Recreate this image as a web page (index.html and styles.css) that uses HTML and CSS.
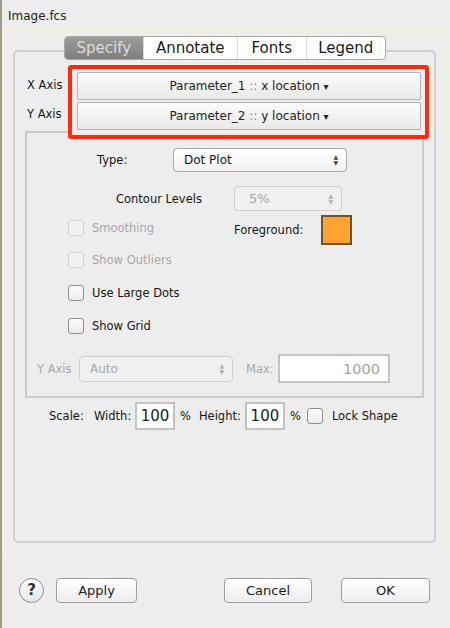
FILE: index.html
```html
<!DOCTYPE html>
<html lang="en">
<head>
    <meta charset="UTF-8">
    <meta name="viewport" content="width=device-width, initial-scale=1.0">
    <title>Image.fcs</title>
    <link rel="stylesheet" href="styles.css">
</head>
<body>
    <div class="window">
        <div class="title">Image.fcs</div>

        <div class="pane">
            <!-- Tabs -->
            <div class="tabs">
                <span class="tab active">Specify</span>
                <span class="tab">Annotate</span>
                <span class="tab">Fonts</span>
                <span class="tab">Legend</span>
            </div>

            <div class="group">
                <!-- Axes -->
                <div class="axes">
                    <div class="axis-labels">
                        <span>X Axis</span>
                        <span>Y Axis</span>
                    </div>
                    <div class="highlight">
                        <button class="axis-button">Parameter_1 <span class="sep">::</span> x location <span class="caret">&#9662;</span></button>
                        <button class="axis-button">Parameter_2 <span class="sep">::</span> y location <span class="caret">&#9662;</span></button>
                    </div>
                </div>

                <div class="inner">
                    <div class="row row-type">
                        <span class="label type-label">Type:</span>
                        <div class="select type-select">
                            <span>Dot Plot</span>
                            <span class="arrows">&#9650;<br>&#9660;</span>
                        </div>
                    </div>

                    <div class="row row-contour">
                        <span class="label contour-label">Contour Levels</span>
                        <div class="select contour-select disabled">
                            <span>5%</span>
                            <span class="arrows">&#9650;<br>&#9660;</span>
                        </div>
                    </div>

                    <div class="row row-smooth">
                        <label class="check disabled smooth-check"><span class="box"></span>Smoothing</label>
                        <span class="label fg-label">Foreground:</span>
                        <span class="swatch"></span>
                    </div>

                    <div class="row row-check first">
                        <label class="check disabled"><span class="box"></span>Show Outliers</label>
                    </div>
                    <div class="row row-check">
                        <label class="check"><span class="box"></span>Use Large Dots</label>
                    </div>
                    <div class="row row-check">
                        <label class="check"><span class="box"></span>Show Grid</label>
                    </div>

                    <div class="row row-yaxis">
                        <span class="label disabled yaxis-label">Y Axis</span>
                        <div class="select yaxis-select disabled">
                            <span>Auto</span>
                            <span class="arrows">&#9650;<br>&#9660;</span>
                        </div>
                        <span class="label disabled max-label">Max:</span>
                        <div class="field max-field disabled">1000</div>
                    </div>
                </div>

                <!-- Escala -->
                <div class="scale">
                    <span class="label scale-label">Scale:</span>
                    <span class="label width-label">Width:</span>
                    <div class="field small">100</div>
                    <span class="label pct">%</span>
                    <span class="label height-label">Height:</span>
                    <div class="field small">100</div>
                    <span class="label pct">%</span>
                    <label class="check lock"><span class="box"></span>Lock Shape</label>
                </div>
            </div>
        </div>

        <div class="footer">
            <span class="help">?</span>
            <button class="btn apply">Apply</button>
            <span class="spacer"></span>
            <button class="btn cancel">Cancel</button>
            <button class="btn ok">OK</button>
        </div>
    </div>
</body>
</html>
```

FILE: styles.css
```css
html {
    box-sizing: border-box;
}
*, *:before, *:after {
    box-sizing: inherit;
}
body {
    margin: 0;
    padding: 0;
    width: 450px;
    height: 628px;
    overflow: hidden;
    background-color: #ededed;
    font-family: 'DejaVu Sans', sans-serif;
    font-size: 11.5px;
    color: #161616;
}

.window {
    height: 628px;
    border-left: 2px solid #a49a86;
}

.title {
    height: 30px;
    padding: 9px 0 0 6px;
    font-size: 12px;
    color: #222;
}

.pane {
    height: 528px;
    margin: 0 2px 0 1px;
    border-top: 1px solid #f4f4d9;
    border-bottom: 1px solid #f4f4d9;
    border-left: 1px solid #f4f4d9;
    border-right: 2px solid #f1f1d6;
    padding-top: 5px;
}

/* Abas */
.tabs {
    display: flex;
    width: 322px;
    height: 24px;
    margin: 0 auto;
    position: relative;
    z-index: 2;
    border: 1px solid #a8a8a8;
    border-radius: 4px;
    background: #fff;
    overflow: hidden;
    font-size: 15px;
}
.tab {
    display: flex;
    align-items: center;
    justify-content: center;
    color: #1a1a1a;
    border-left: 1px solid #d8d8d8;
}
.tab:nth-child(1) { width: 78px; border-left: none; }
.tab:nth-child(2) { width: 95px; }
.tab:nth-child(3) { width: 69px; }
.tab:nth-child(4) { width: 80px; }
.tab.active {
    background: linear-gradient(#9c9c9c, #7e7e7e);
    color: #dcdcdc;
}

.group {
    height: 493px;
    margin: -10px 10px 0 9px;
    border: 2px solid #d0d0d0;
    border-radius: 5px;
    padding-top: 13px;
}

/* Eixos */
.axes {
    display: flex;
    position: relative;
    z-index: 1;
}
.axis-labels {
    width: 53px;
    padding-left: 12px;
    padding-top: 13px;
    display: flex;
    flex-direction: column;
    gap: 15px;
}
.highlight {
    width: 361px;
    border: 4px solid #ff2a10;
    border-radius: 3px;
    padding: 3px 4px 5px 5px;
    display: flex;
    flex-direction: column;
    gap: 2px;
    background: #ededed;
}
.axis-button {
    height: 28px;
    border: 1px solid #b5b5b5;
    border-radius: 2px;
    background: linear-gradient(#fbfbfb, #e9e9e9);
    font-family: inherit;
    font-size: 12px;
    color: #222;
    padding: 0;
}
.axis-button .sep {
    color: #888;
}
.axis-button .caret {
    font-size: 10px;
}

.inner {
    margin: -8px 10px 0 10px;
    height: 267px;
    border: 2px solid #cacaca;
    padding-top: 15px;
}

.row {
    display: flex;
    align-items: center;
}
.label {
    white-space: nowrap;
}
.disabled {
    color: #a8a8a8;
}

.select {
    display: flex;
    align-items: center;
    justify-content: space-between;
    border: 1px solid #a9a9a9;
    border-radius: 4px;
    background: linear-gradient(#ffffff, #f1f1f1);
    padding: 0 8px 0 10px;
    font-size: 12px;
}
.select.disabled {
    border-color: #cfcfcf;
    background: #f0f0f0;
}
.arrows {
    font-size: 6px;
    line-height: 6px;
    text-align: center;
    color: #444;
}
.select.disabled .arrows {
    color: #b0b0b0;
}

.row-type {
    height: 24px;
    padding-left: 70px;
}
.type-label { width: 76px; }
.type-select { width: 174px; height: 24px; }

.row-contour {
    height: 25px;
    margin-top: 14px;
    padding-left: 89px;
}
.contour-label { width: 118px; }
.contour-select {
    width: 108px;
    height: 25px;
    font-size: 13px;
    padding-left: 14px;
}

.row-smooth {
    height: 30px;
    margin-top: 4px;
    padding-left: 41px;
}
.smooth-check { width: 166px; margin-top: -4px; }
.fg-label { width: 87px; }
.swatch {
    width: 31px;
    height: 30px;
    background: #ffa431;
    border: 2px solid #6b5230;
}

.check {
    display: flex;
    align-items: center;
    gap: 8px;
    white-space: nowrap;
}
.box {
    width: 16px;
    height: 16px;
    border: 1px solid #8f8f8f;
    border-radius: 3px;
    background: linear-gradient(#fafafa, #ececec);
}
.check.disabled .box {
    border-color: #cfcfcf;
    background: #f1f1f1;
}

.row-check {
    height: 16px;
    margin-top: 17px;
    padding-left: 41px;
}
.row-check.first {
    margin-top: 7px;
}

.row-yaxis {
    height: 29px;
    margin-top: 20px;
    padding-left: 10px;
}
.yaxis-label { width: 42px; }
.yaxis-select {
    width: 154px;
    height: 26px;
    font-size: 12px;
}
.max-label {
    margin-left: 13px;
    width: 32px;
}

.field {
    display: flex;
    align-items: center;
    justify-content: flex-end;
    background: #fff;
    border: 2px solid #c2c2c2;
    font-size: 14px;
    color: #222;
}
.max-field {
    width: 112px;
    height: 29px;
    padding-right: 8px;
    font-size: 14.5px;
    color: #a2a2a2;
}
.field.small {
    width: 40px;
    height: 28px;
    justify-content: center;
    font-size: 15px;
}

/* Escala */
.scale {
    display: flex;
    align-items: center;
    margin-top: 4px;
    padding-left: 34px;
    height: 28px;
}
.scale-label { width: 45px; }
.width-label { width: 41px; }
.pct { margin-left: 5px; }
.height-label { margin-left: 8px; width: 46px; }
.lock { margin-left: 6px; gap: 9px; }

/* Botoes */
.footer {
    display: flex;
    align-items: center;
    height: 69px;
    padding: 0 20px 5px 17px;
}
.help {
    width: 25px;
    height: 25px;
    border: 1px solid #8f8f8f;
    border-radius: 50%;
    background: linear-gradient(#fdfdfd, #e6e6e6);
    display: flex;
    align-items: center;
    justify-content: center;
    font-size: 15px;
    font-weight: bold;
    color: #333;
    margin-right: 12px;
}
.spacer {
    flex: 1;
}
.btn {
    height: 25px;
    border: 1px solid #9f9f9f;
    border-radius: 4px;
    background: linear-gradient(#ffffff, #ededed);
    font-family: inherit;
    font-size: 13px;
    color: #222;
    padding: 0;
}
.apply { width: 81px; }
.cancel { width: 88px; }
.ok { width: 89px; margin-left: 29px; }
```
